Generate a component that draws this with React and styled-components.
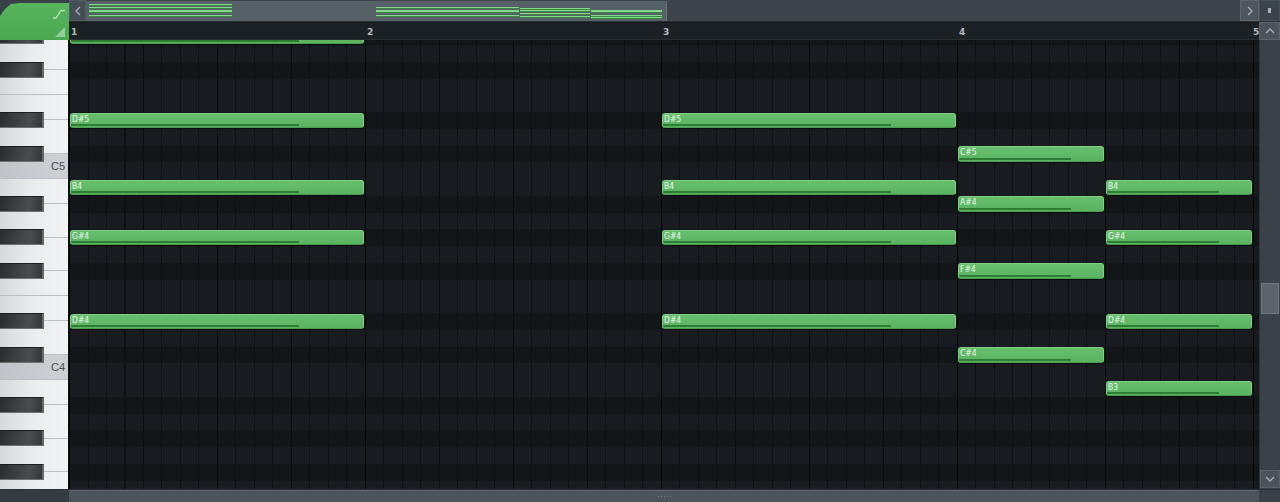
import React from "react";
import styled, { createGlobalStyle } from "styled-components";

const ROW = 16.75;
const C5_TOP = 122.25;
const BAR = 296;
const rowTop = (m) => C5_TOP + (72 - m) * ROW;
const isBlack = (m) => [1, 3, 6, 8, 10].includes(((m % 12) + 12) % 12);
const NAMES = ["C", "C#", "D", "D#", "E", "F", "F#", "G", "G#", "A", "A#", "B"];
const noteName = (m) => NAMES[m % 12] + (Math.floor(m / 12) - 1);

const NOTES = [
  ...[80, 75, 71, 68, 63].map((m) => ({ m, s: 0, l: 1 })),
  ...[75, 71, 68, 63].map((m) => ({ m, s: 2, l: 1 })),
  ...[73, 70, 66, 61].map((m) => ({ m, s: 3, l: 0.5 })),
  ...[71, 68, 63, 59].map((m) => ({ m, s: 3.5, l: 0.5 })),
];

const GlobalStyle = createGlobalStyle`
  html, body { margin: 0; padding: 0; background: #1b2024; overflow: hidden; }
  * { box-sizing: border-box; }
`;

const Frame = styled.div`
  width: 1280px;
  height: 502px;
  display: grid;
  grid-template-columns: 69px 1190px 21px;
  grid-template-rows: 22px 18px 449px 13px;
  background: #1b2024;
  font-family: "Liberation Sans", Arial, sans-serif;
  overflow: hidden;
`;

const Corner = styled.div`
  grid-column: 1;
  grid-row: 1 / span 2;
  background: #394148;
  padding-top: 3px;
  display: flex;
`;

const Tab = styled.div`
  flex: 1;
  background: linear-gradient(to bottom, #57b65d, #4aa950);
  clip-path: polygon(20px 0, 100% 0, 100% 100%, 0 100%, 0 13px, 5px 6px, 11px 1px);
  display: flex;
  flex-direction: column;
  align-items: flex-end;
  justify-content: space-between;
  padding: 6px 4px 3px 0;
`;

const TopBar = styled.div`
  grid-column: 2 / span 2;
  grid-row: 1;
  display: flex;
  background: #394148;
  border-bottom: 1px solid #2a3136;
`;

const ArrowBtn = styled.div`
  width: ${(p) => p.$w || 17}px;
  flex: none;
  display: flex;
  align-items: center;
  justify-content: center;
  background: ${(p) => p.$bg || "#454e55"};
  border: 1px solid ${(p) => p.$bd || "#525b62"};
  color: #aeb6bb;
`;

const Overview = styled.div`
  flex: 1;
  position: relative;
  background: #3d454b;
  overflow: hidden;
`;

const OverviewWindow = styled.div`
  position: absolute;
  left: 0;
  top: 1px;
  bottom: 0;
  width: 581px;
  background: #566067;
  border-right: 1px solid #6a737a;
`;

const MiniNote = styled.div`
  position: absolute;
  height: 1px;
  background: #86d68b;
  box-shadow: 0 1px 0 #3b8a41;
`;

const Ruler = styled.div`
  grid-column: 2;
  grid-row: 2;
  position: relative;
  background: #1b2125;
  border-bottom: 1px solid #272e33;
  border-top: 1px solid #15191c;
`;

const BarNum = styled.span`
  position: absolute;
  top: 4px;
  font-size: 9px;
  font-weight: bold;
  color: #b3bbc0;
  font-family: "DejaVu Sans", sans-serif;
`;

const UpBtn = styled(ArrowBtn)`
  grid-column: 3;
  grid-row: 2;
  width: auto;
  background: #4a535a;
  border-color: #5a636a;
`;

const Piano = styled.div`
  grid-column: 1;
  grid-row: 3;
  position: relative;
  overflow: hidden;
  border-right: 1px solid #0d1012;
  background: #e9ebed;
`;

const WhiteCol = styled.div`
  display: flex;
  flex-direction: column;
  margin-top: ${(p) => p.$offset}px;
`;

const WhiteKey = styled.div`
  flex: none;
  display: flex;
  align-items: center;
  justify-content: flex-end;
  padding-right: 3px;
  border-bottom: 1px solid #bcc0c4;
  background: ${(p) =>
    p.$c
      ? "linear-gradient(to right, #bfc2c6, #c9ccd0 60%, #ced1d4)"
      : "linear-gradient(to right, #d6d9dc, #e9ebed 45%, #f2f3f4)"};
  font-size: 11px;
  color: #4b4f53;
`;

const BlackKey = styled.div`
  position: absolute;
  left: 0;
  width: 44px;
  height: 16px;
  background: linear-gradient(100deg, #2a2c2e 0%, #3f4244 45%, #4a4d50 70%, #333537 100%);
  border-right: 2px solid #64686b;
  border-bottom: 1px solid #6d7174;
  border-top: 1px solid #1c1d1f;
`;

const Grid = styled.div`
  grid-column: 2;
  grid-row: 3;
  position: relative;
  overflow: hidden;
  background: #171b1e;
`;

const Rows = styled.div`
  display: flex;
  flex-direction: column;
  margin-top: ${(p) => p.$offset}px;
`;

const Row = styled.div`
  flex: none;
  height: ${ROW}px;
  background: ${(p) => (p.$black ? "#131619" : "#181c20")};
`;

const Lines = styled.div`
  position: absolute;
  inset: 0;
  pointer-events: none;
  background-image:
    repeating-linear-gradient(to right, #050607 0 1px, transparent 1px ${BAR}px),
    repeating-linear-gradient(to right, #0a0c0e 0 1px, transparent 1px 74px),
    repeating-linear-gradient(to right, #0e1113 0 1px, transparent 1px 18.5px);
`;

const Note = styled.div`
  position: absolute;
  height: 15.5px;
  border-radius: 3px;
  background: linear-gradient(to bottom, #66bf6c, #5ab360);
  border: 1px solid #7fcf84;
  border-bottom-color: #4a9a50;
  box-shadow: 0 1px 1px rgba(0, 0, 0, 0.5);
  overflow: hidden;
`;

const NoteLabel = styled.span`
  position: absolute;
  left: 1px;
  top: 0px;
  font-family: "DejaVu Sans Condensed", "DejaVu Sans", sans-serif;
  font-size: 8.5px;
  line-height: 10px;
  color: #eef8ee;
`;

const Velocity = styled.div`
  position: absolute;
  left: 0;
  bottom: 1px;
  height: 2px;
  width: 78%;
  background: #2f7d35;
`;

const VScroll = styled.div`
  grid-column: 3;
  grid-row: 3;
  background: #3a4248;
  border-left: 1px solid #2c3338;
  display: flex;
  flex-direction: column;
  padding-top: 243px;
`;

const Thumb = styled.div`
  height: 31px;
  margin: 0 1px 0 1px;
  background: #5b646a;
  border: 1px solid #6e777d;
`;

const DownBtn = styled(ArrowBtn)`
  width: auto;
  height: 18px;
  margin-top: auto;
  margin-bottom: 1px;
  background: #4a535a;
  border-color: #5a636a;
`;

const BottomBar = styled.div`
  grid-column: 1 / span 3;
  grid-row: 4;
  display: grid;
  grid-template-columns: 69px 1fr 21px;
  border-top: 1px solid #2b3237;
`;

const BottomLeft = styled.div`
  background: #353c41;
`;

const HBar = styled.div`
  background: #4b545a;
  border-top: 1px solid #5b646a;
  display: flex;
  align-items: center;
  justify-content: center;
`;

const Grip = styled.div`
  width: 14px;
  height: 3px;
  background-image: radial-gradient(circle, #7b848a 0.7px, transparent 1px);
  background-size: 3px 3px;
`;

const BottomRight = styled.div`
  background: #394147;
`;

const Chevron = ({ dir }) => {
  const paths = {
    left: "M6 1 L2 5 L6 9",
    right: "M2 1 L6 5 L2 9",
    up: "M1 6 L5 2 L9 6",
    down: "M1 2 L5 6 L9 2",
  };
  const vertical = dir === "up" || dir === "down";
  return (
    <svg width={vertical ? 10 : 8} height={vertical ? 8 : 10} viewBox={vertical ? "0 0 10 8" : "0 0 8 10"}>
      <path d={paths[dir]} fill="none" stroke="#aab2b8" strokeWidth="1.3" />
    </svg>
  );
};

export default function App() {
  const whites = [];
  for (let m = 83; m >= 50; m--) {
    if (isBlack(m)) continue;
    const pc = m % 12;
    const top = pc === 4 || pc === 11 ? rowTop(m) : rowTop(m + 1) + ROW / 2;
    const bottom = pc === 0 || pc === 5 ? rowTop(m) + ROW : rowTop(m - 1) + ROW / 2;
    whites.push({ m, top, h: bottom - top });
  }
  const blacks = [];
  for (let m = 83; m >= 50; m--) if (isBlack(m)) blacks.push(m);
  const rows = [];
  for (let m = 81; m >= 50; m--) rows.push(m);

  return (
    <>
      <GlobalStyle />
      <Frame>
        <Corner>
          <Tab>
            <svg width="12" height="10" viewBox="0 0 12 10">
              <path d="M0 9 H3 L8 1.5 H12" fill="none" stroke="#b9e4bb" strokeWidth="1.3" />
            </svg>
            <svg width="10" height="10" viewBox="0 0 10 10">
              <path d="M10 0 V10 H0 Z" fill="#a6dba9" opacity="0.8" />
            </svg>
          </Tab>
        </Corner>
        <TopBar>
          <ArrowBtn $w={17}>
            <Chevron dir="left" />
          </ArrowBtn>
          <Overview>
            <OverviewWindow />
            {NOTES.map((n, i) => (
              <MiniNote
                key={i}
                style={{
                  left: 3 + n.s * 143.5,
                  width: n.l * 143.5 - 1,
                  top: Math.round(4 + (80 - n.m) * 0.62),
                }}
              />
            ))}
          </Overview>
          <ArrowBtn $w={19} $bg="#4d565d" $bd="#5d666d">
            <Chevron dir="right" />
          </ArrowBtn>
          <ArrowBtn $w={21} $bg="#3c444b" $bd="#465057">
            <svg width="3" height="5">
              <rect width="3" height="5" fill="#aab2b8" />
            </svg>
          </ArrowBtn>
        </TopBar>
        <Ruler>
          {[1, 2, 3, 4, 5].map((b) => (
            <BarNum key={b} style={{ left: (b - 1) * BAR + (b === 5 ? 0 : 2) }}>
              {b}
            </BarNum>
          ))}
        </Ruler>
        <UpBtn>
          <Chevron dir="up" />
        </UpBtn>
        <Piano>
          <WhiteCol $offset={whites[0].top}>
            {whites.map((w) => (
              <WhiteKey key={w.m} $c={w.m % 12 === 0} style={{ height: w.h }}>
                {w.m % 12 === 0 ? noteName(w.m) : null}
              </WhiteKey>
            ))}
          </WhiteCol>
          {blacks.map((m) => (
            <BlackKey key={m} style={{ top: rowTop(m) }} />
          ))}
        </Piano>
        <Grid>
          <Rows $offset={rowTop(81)}>
            {rows.map((m) => (
              <Row key={m} $black={isBlack(m)} />
            ))}
          </Rows>
          <Lines />
          {NOTES.map((n, i) => {
            const top = rowTop(n.m) + 0.5;
            return (
              <Note
                key={i}
                style={{
                  left: n.s * BAR + 1,
                  width: n.l * BAR - 2,
                  top,
                }}
              >
                {top >= 0 ? <NoteLabel>{noteName(n.m)}</NoteLabel> : null}
                <Velocity />
              </Note>
            );
          })}
        </Grid>
        <VScroll>
          <Thumb />
          <DownBtn>
            <Chevron dir="down" />
          </DownBtn>
        </VScroll>
        <BottomBar>
          <BottomLeft />
          <HBar>
            <Grip />
          </HBar>
          <BottomRight />
        </BottomBar>
      </Frame>
    </>
  );
}
